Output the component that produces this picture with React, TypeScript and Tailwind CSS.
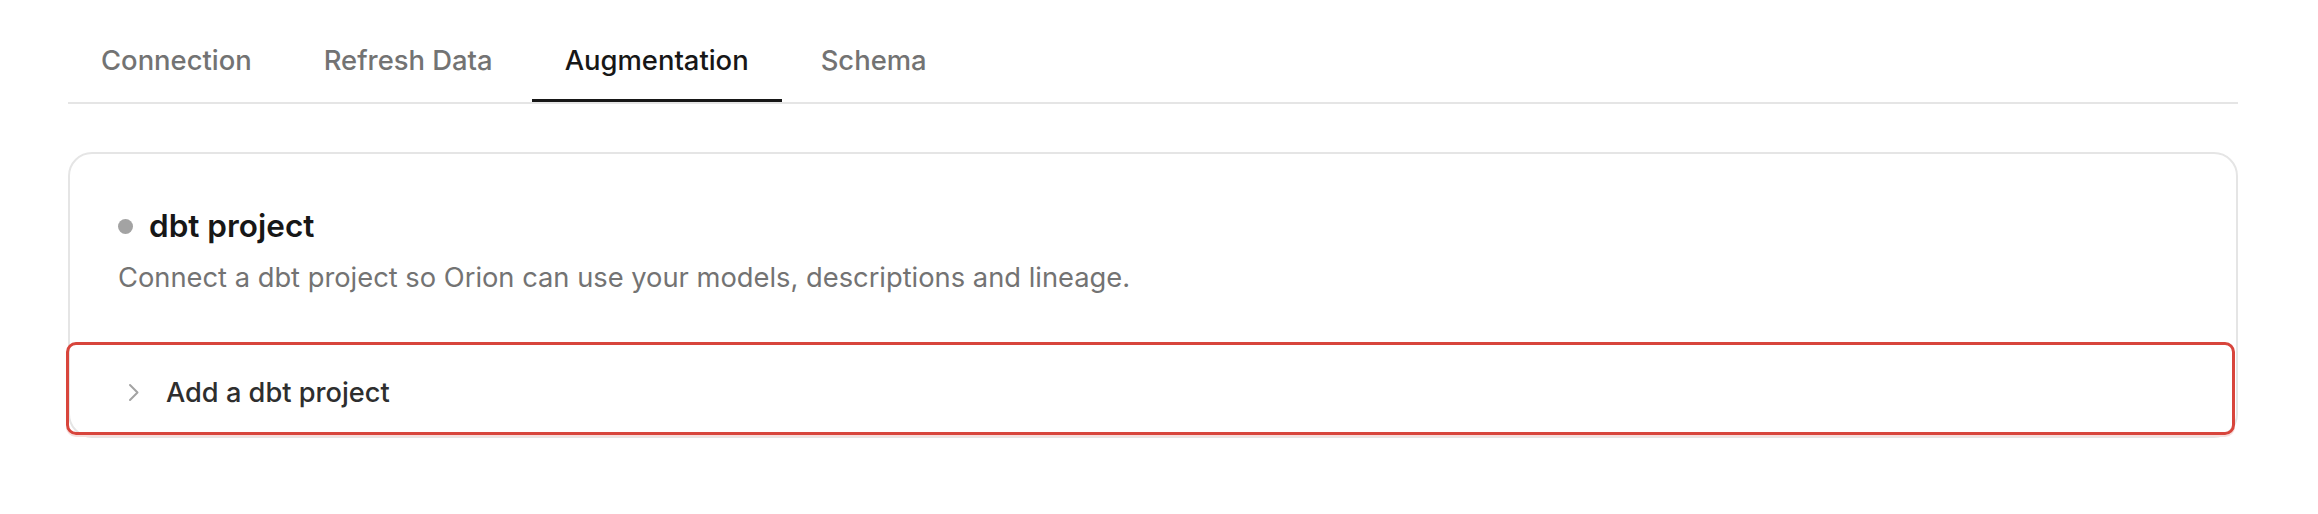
import { useState } from 'react';

const tabs = ['Connection', 'Refresh Data', 'Augmentation', 'Schema'];

function Chevron() {
  return (
    <svg width="32" height="32" viewBox="0 0 32 32" fill="none" className="shrink-0">
      <path d="M12 8l7.5 7.5L12 23" stroke="#a3a3a3" strokeWidth="2" strokeLinecap="round" strokeLinejoin="round" />
    </svg>
  );
}

export default function App() {
  const [active, setActive] = useState('Augmentation');

  return (
    <div className="min-h-[514px] bg-white pl-[68px] pr-[80px] pt-[40px] font-['Inter',sans-serif]">
      <div className="flex gap-[6px] border-b-2 border-[#e5e5e5]">
        {tabs.map((tab) => (
          <button
            key={tab}
            onClick={() => setActive(tab)}
            className={`border-b-[3px] px-[33px] pb-[19px] text-[27.4px] font-medium leading-[40px] ${
              active === tab ? 'border-[#171717] text-[#171717]' : 'border-transparent text-[#737373]'
            }`}
          >
            {tab}
          </button>
        ))}
      </div>

      <div className="mt-[48px] rounded-[24px] border-2 border-[#e5e5e5] bg-white">
        <div className="px-[48px] pt-[48px] pb-[44px]">
          <div className="flex items-center gap-4">
            <span className="h-[15px] w-[15px] rounded-full bg-[#a3a3a3]" />
            <h2 className="text-[31.5px] font-semibold leading-[48px] text-[#171717]">dbt project</h2>
          </div>
          <p className="mt-2 text-[27.3px] leading-[40px] text-[#737373]">
            Connect a dbt project so Orion can use your models, descriptions and lineage.
          </p>
        </div>

        <button className="-ml-[4px] mr-[1px] mb-[1px] flex w-[calc(100%+3px)] items-center gap-4 rounded-[10px] border-[3px] border-[#d8453c] pl-[49px] pt-[28px] pb-[19px] text-left shadow-[0_2px_0_#f6dedc]">
          <Chevron />
          <span className="text-[27.2px] font-medium leading-[40px] text-[#2e2e2e]">Add a dbt project</span>
        </button>
      </div>
    </div>
  );
}
